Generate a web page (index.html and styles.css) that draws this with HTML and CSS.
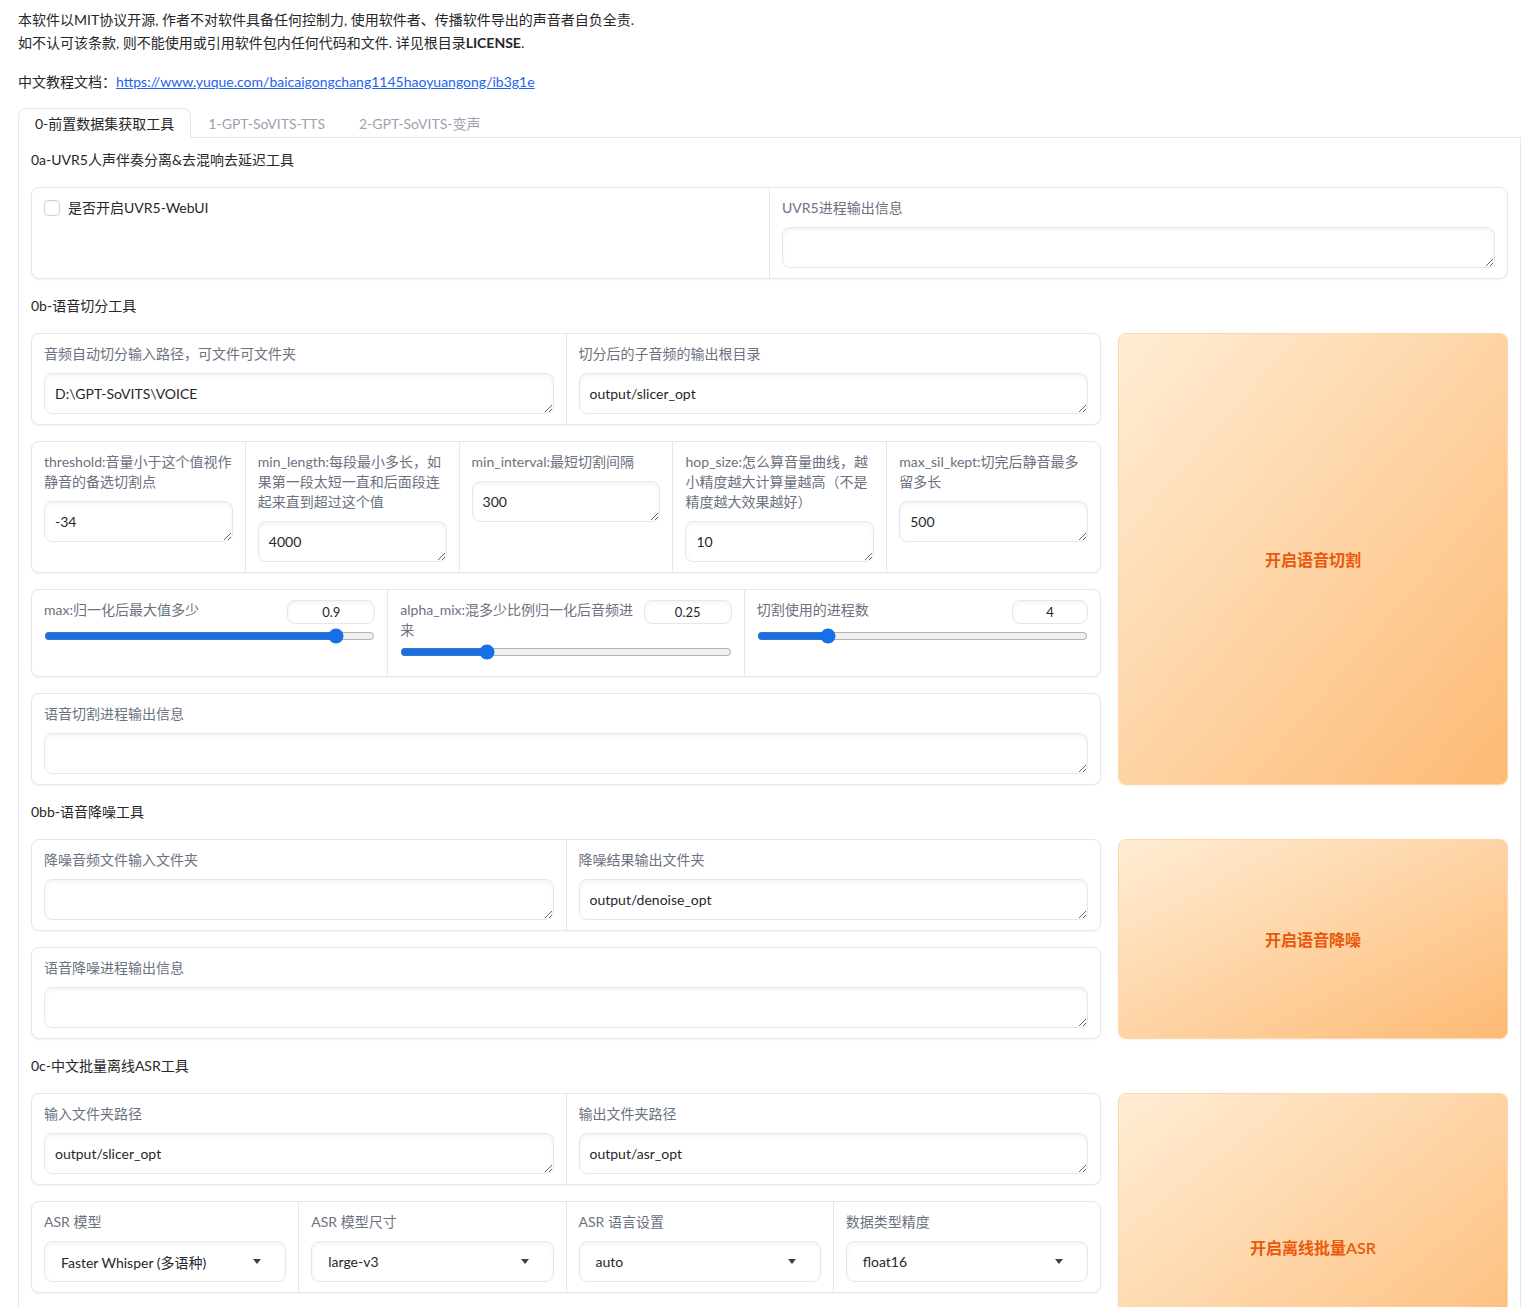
FILE: index.html
```html
<!DOCTYPE html>
<html lang="zh-CN">
<head>
<meta charset="utf-8">
<title>GPT-SoVITS WebUI</title>
<link rel="stylesheet" href="styles.css">
</head>
<body>
<div class="app">
  <div class="intro">
    <p>本软件以MIT协议开源, 作者不对软件具备任何控制力, 使用软件者、传播软件导出的声音者自负全责.<br>如不认可该条款, 则不能使用或引用软件包内任何代码和文件. 详见根目录<b>LICENSE</b>.</p>
    <p class="last">中文教程文档：<a href="#">https://www.yuque.com/baicaigongchang1145haoyuangong/ib3g1e</a></p>
  </div>

  <div class="tabs">
    <div class="tab-nav">
      <button class="tab selected">0-前置数据集获取工具</button>
      <button class="tab">1-GPT-SoVITS-TTS</button>
      <button class="tab">2-GPT-SoVITS-变声</button>
    </div>
    <div class="tab-panel">
      <div class="heading">0a-UVR5人声伴奏分离&amp;去混响去延迟工具</div>
      <div class="form">
        <div class="cell">
          <label class="check-row"><input type="checkbox" class="check"><span>是否开启UVR5-WebUI</span></label>
        </div>
        <div class="cell">
          <span class="label">UVR5进程输出信息</span>
          <textarea class="input"></textarea>
        </div>
      </div>

      <div class="heading">0b-语音切分工具</div>
      <div class="tool-row">
        <div class="tool-col">
          <div class="form">
            <div class="cell">
              <span class="label">音频自动切分输入路径，可文件可文件夹</span>
              <textarea class="input">D:\GPT-SoVITS\VOICE</textarea>
            </div>
            <div class="cell">
              <span class="label">切分后的子音频的输出根目录</span>
              <textarea class="input">output/slicer_opt</textarea>
            </div>
          </div>
          <div class="form">
            <div class="cell">
              <span class="label">threshold:音量小于这个值视作静音的备选切割点</span>
              <textarea class="input">-34</textarea>
            </div>
            <div class="cell">
              <span class="label">min_length:每段最小多长，如果第一段太短一直和后面段连起来直到超过这个值</span>
              <textarea class="input">4000</textarea>
            </div>
            <div class="cell">
              <span class="label">min_interval:最短切割间隔</span>
              <textarea class="input">300</textarea>
            </div>
            <div class="cell">
              <span class="label">hop_size:怎么算音量曲线，越小精度越大计算量越高（不是精度越大效果越好）</span>
              <textarea class="input">10</textarea>
            </div>
            <div class="cell">
              <span class="label">max_sil_kept:切完后静音最多留多长</span>
              <textarea class="input">500</textarea>
            </div>
          </div>
          <div class="form">
            <div class="cell slider-cell">
              <div class="slider-head">
                <span class="label">max:归一化后最大值多少</span>
                <input class="num" type="text" value="0.9">
              </div>
              <input class="range" type="range" min="0" max="1" step="0.05" value="0.9">
            </div>
            <div class="cell slider-cell">
              <div class="slider-head">
                <span class="label">alpha_mix:混多少比例归一化后音频进来</span>
                <input class="num" type="text" value="0.25">
              </div>
              <input class="range" type="range" min="0" max="1" step="0.05" value="0.25">
            </div>
            <div class="cell slider-cell">
              <div class="slider-head">
                <span class="label">切割使用的进程数</span>
                <input class="num narrow" type="text" value="4">
              </div>
              <input class="range" type="range" min="1" max="16" step="1" value="4">
            </div>
          </div>
          <div class="form">
            <div class="cell">
              <span class="label">语音切割进程输出信息</span>
              <textarea class="input"></textarea>
            </div>
          </div>
        </div>
        <button class="primary">开启语音切割</button>
      </div>

      <div class="heading">0bb-语音降噪工具</div>
      <div class="tool-row">
        <div class="tool-col">
          <div class="form">
            <div class="cell">
              <span class="label">降噪音频文件输入文件夹</span>
              <textarea class="input"></textarea>
            </div>
            <div class="cell">
              <span class="label">降噪结果输出文件夹</span>
              <textarea class="input">output/denoise_opt</textarea>
            </div>
          </div>
          <div class="form">
            <div class="cell">
              <span class="label">语音降噪进程输出信息</span>
              <textarea class="input"></textarea>
            </div>
          </div>
        </div>
        <button class="primary">开启语音降噪</button>
      </div>

      <div class="heading">0c-中文批量离线ASR工具</div>
      <div class="tool-row">
        <div class="tool-col">
          <div class="form">
            <div class="cell">
              <span class="label">输入文件夹路径</span>
              <textarea class="input">output/slicer_opt</textarea>
            </div>
            <div class="cell">
              <span class="label">输出文件夹路径</span>
              <textarea class="input">output/asr_opt</textarea>
            </div>
          </div>
          <div class="form">
            <div class="cell">
              <span class="label">ASR 模型</span>
              <div class="dropdown"><span>Faster Whisper (多语种)</span><svg class="caret" width="8" height="5" viewBox="0 0 8 5"><path d="M0 0h8L4 5z" fill="#374151"/></svg></div>
            </div>
            <div class="cell">
              <span class="label">ASR 模型尺寸</span>
              <div class="dropdown"><span>large-v3</span><svg class="caret" width="8" height="5" viewBox="0 0 8 5"><path d="M0 0h8L4 5z" fill="#374151"/></svg></div>
            </div>
            <div class="cell">
              <span class="label">ASR 语言设置</span>
              <div class="dropdown"><span>auto</span><svg class="caret" width="8" height="5" viewBox="0 0 8 5"><path d="M0 0h8L4 5z" fill="#374151"/></svg></div>
            </div>
            <div class="cell">
              <span class="label">数据类型精度</span>
              <div class="dropdown"><span>float16</span><svg class="caret" width="8" height="5" viewBox="0 0 8 5"><path d="M0 0h8L4 5z" fill="#374151"/></svg></div>
            </div>
          </div>
          <div class="form">
            <div class="cell">
              <span class="label">ASR进程输出信息</span>
              <textarea class="input"></textarea>
            </div>
          </div>
        </div>
        <button class="primary">开启离线批量ASR</button>
      </div>
    </div>
  </div>
</div>
</body>
</html>
```

FILE: styles.css
```css
html {
  overflow: hidden;
}

body {
  margin: 0;
  background: #ffffff;
  color: #27272a;
  font-family: "Lato", "Noto Sans CJK SC", sans-serif;
  font-size: 14px;
}

.app {
  padding: 8px 18px 0;
}

.intro p {
  margin: 0 0 16px;
  line-height: 23px;
}

.intro p.last {
  margin-bottom: 0;
}

.intro b {
  font-weight: 700;
}

.intro a {
  color: #2563eb;
  text-decoration: underline;
}

.tabs {
  margin-top: 15px;
}

.tab-nav {
  display: flex;
  height: 29px;
  border-bottom: 1px solid #e5e7eb;
}

.tab {
  height: 30px;
  margin: 0 0 -1px;
  padding: 0 16px;
  border: 1px solid transparent;
  border-bottom: none;
  border-radius: 8px 8px 0 0;
  background: transparent;
  color: #9ca3af;
  font-family: inherit;
  font-size: 14px;
  line-height: 28px;
  cursor: pointer;
}

.tab.selected {
  border-color: #e5e7eb;
  background: #ffffff;
  color: #27272a;
}

.tab-panel {
  display: flex;
  flex-direction: column;
  gap: 16px;
  padding: 11px 12px 16px;
  border: 1px solid #e5e7eb;
  border-top: none;
  border-radius: 0 0 8px 8px;
}

.heading {
  line-height: 22px;
  color: #27272a;
}

.form {
  display: flex;
  gap: 1px;
  background: #e5e7eb;
  border: 1px solid #e5e7eb;
  border-radius: 8px;
  overflow: hidden;
  box-shadow: 0 1px 2px rgba(0, 0, 0, 0.05);
}

.cell {
  flex: 1 1 0;
  min-width: 0;
  display: flex;
  flex-direction: column;
  align-items: stretch;
  gap: 9px;
  padding: 10px 12px;
  background: #ffffff;
}

.label {
  color: #6b7280;
  line-height: 20px;
}

.input {
  display: block;
  box-sizing: border-box;
  width: 100%;
  height: 41px;
  margin: 0;
  padding: 10px;
  border: 1px solid #e5e7eb;
  border-radius: 8px;
  background: #ffffff;
  box-shadow: inset 0 2px 4px rgba(0, 0, 0, 0.05);
  color: #27272a;
  font-family: inherit;
  font-size: 14px;
  line-height: 19px;
  resize: vertical;
  outline: none;
}

.check-row {
  display: flex;
  align-items: center;
  gap: 8px;
  line-height: 20px;
  color: #27272a;
}

.check {
  appearance: none;
  width: 16px;
  height: 16px;
  margin: 0;
  border: 1px solid #d1d5db;
  border-radius: 4px;
  background: #ffffff;
  box-shadow: inset 0 1px 2px rgba(0, 0, 0, 0.05);
}

.slider-cell {
  gap: 2px;
  padding-bottom: 14px;
}

.slider-head {
  display: flex;
  justify-content: space-between;
  align-items: flex-start;
  gap: 8px;
  min-height: 24px;
}

.num {
  flex: 0 0 auto;
  box-sizing: border-box;
  width: 88px;
  height: 24px;
  margin: 0;
  padding: 0 6px;
  border: 1px solid #e5e7eb;
  border-radius: 8px;
  background: #ffffff;
  box-shadow: inset 0 2px 4px rgba(0, 0, 0, 0.05);
  color: #27272a;
  font-family: inherit;
  font-size: 13px;
  text-align: center;
  outline: none;
}

.num.narrow {
  width: 76px;
}

.range {
  width: 100%;
  height: 20px;
  margin: 0;
  accent-color: #1570e8;
}

.dropdown {
  display: flex;
  align-items: center;
  justify-content: space-between;
  box-sizing: border-box;
  height: 41px;
  padding: 0 24px 0 16px;
  border: 1px solid #e5e7eb;
  border-radius: 8px;
  background: #ffffff;
  box-shadow: inset 0 2px 4px rgba(0, 0, 0, 0.05);
  color: #27272a;
  white-space: nowrap;
}

.caret {
  flex: 0 0 auto;
}

.tool-row {
  display: grid;
  grid-template-columns: 1fr 390px;
  gap: 17px;
}

.tool-col {
  display: flex;
  flex-direction: column;
  gap: 16px;
  min-width: 0;
}

.primary {
  border: 1px solid #fed7aa;
  border-radius: 8px;
  background: linear-gradient(to bottom right, #ffedd5, #fdba74);
  box-shadow: 0 1px 2px rgba(0, 0, 0, 0.05);
  color: #ea580c;
  font-family: inherit;
  font-size: 16px;
  font-weight: 600;
  cursor: pointer;
}
```
